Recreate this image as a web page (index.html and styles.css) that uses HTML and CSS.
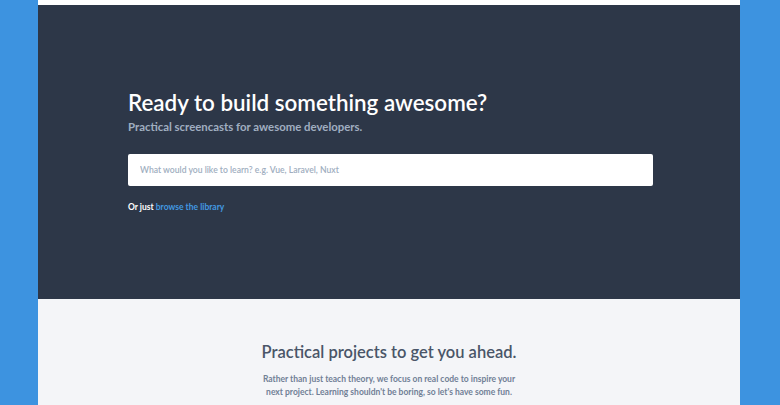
FILE: index.html
```html
<!DOCTYPE html>
<html lang="en">
<head>
<meta charset="utf-8">
<title>Ready to build something awesome?</title>
<link rel="stylesheet" href="styles.css">
</head>
<body>
<div class="page">
  <div class="topbar"></div>
  <section class="hero">
    <div class="hero-inner">
      <h1 class="hero-title">Ready to build something awesome?</h1>
      <p class="hero-sub">Practical screencasts for awesome developers.</p>
      <div class="search">
        <input class="search-input" type="text" placeholder="What would you like to learn? e.g. Vue, Laravel, Nuxt">
      </div>
      <p class="browse">Or just <a href="#" class="browse-link">browse the library</a></p>
    </div>
  </section>
  <section class="intro">
    <h2 class="intro-title">Practical projects to get you ahead.</h2>
    <p class="intro-text">Rather than just teach theory, we focus on real code to inspire your<br>next project. Learning shouldn't be boring, so let's have some fun.</p>
  </section>
</div>
</body>
</html>
```

FILE: styles.css
```css
html, body {
  margin: 0;
  padding: 0;
}
body {
  background: #3d93e0;
  font-family: "Lato", "Nunito", "Open Sans", sans-serif;
  height: 405px;
  overflow: hidden;
}
.page {
  width: 702px;
  margin-left: 38px;
  background: #f4f5f8;
  min-height: 405px;
}
.topbar {
  height: 5px;
  background: #ffffff;
}
.hero {
  background: #2d3748;
  height: 294px;
  box-sizing: border-box;
  padding-top: 84px;
}
.hero-inner {
  width: 525px;
  margin-left: 90px;
}
.hero-title {
  margin: 0;
  color: #ffffff;
  font-size: 22.4px;
  font-weight: 600;
  line-height: 28px;
}
.hero-sub {
  margin: 3px 0 0;
  color: #a0aec0;
  font-size: 11.4px;
  font-weight: 700;
  line-height: 14px;
}
.search {
  margin-top: 20px;
}
.search-input {
  display: block;
  box-sizing: border-box;
  width: 525px;
  height: 32px;
  border: none;
  border-radius: 2px;
  background: #ffffff;
  padding: 0 12px;
  font-family: inherit;
  font-size: 8.6px;
  font-weight: 600;
  color: #4a5568;
  outline: none;
}
.search-input::placeholder {
  color: #a0aec0;
}
.browse {
  margin: 15px 0 0;
  color: #ffffff;
  font-size: 8.5px;
  font-weight: 700;
  line-height: 12px;
}
.browse-link {
  color: #4299e1;
  text-decoration: none;
}
.intro {
  text-align: center;
  padding-top: 42px;
}
.intro-title {
  margin: 0;
  color: #4a5568;
  font-size: 16.5px;
  font-weight: 600;
  line-height: 22px;
}
.intro-text {
  margin: 10px 0 0;
  color: #718096;
  font-size: 8.5px;
  font-weight: 700;
  line-height: 13px;
}
```
